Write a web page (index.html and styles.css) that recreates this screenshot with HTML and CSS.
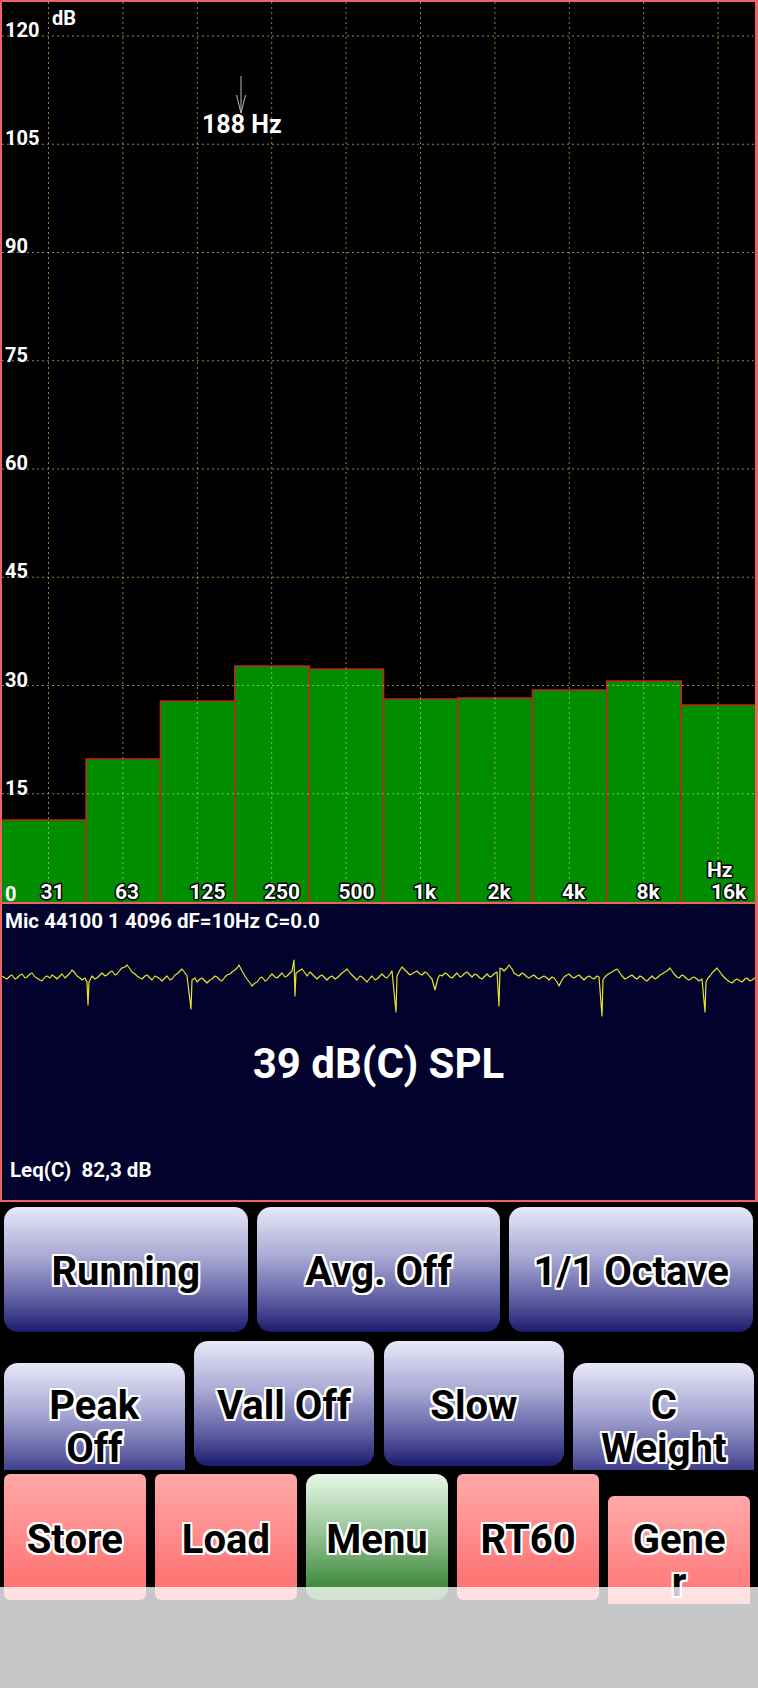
FILE: index.html
```html
<!DOCTYPE html>
<html>
<head>
<meta charset="utf-8">
<link rel="stylesheet" href="styles.css">
</head>
<body>
<div class="screen">
  <div class="chart">
    <svg class="chart-svg" width="753" height="900" viewBox="0 0 753 900">
      <g class="bars">
        <rect x="-2" y="818" width="86" height="84"/>
        <rect x="84" y="757" width="74.4" height="145"/>
        <rect x="158.4" y="699" width="74.4" height="203"/>
        <rect x="232.8" y="664" width="74.4" height="238"/>
        <rect x="307.2" y="667" width="74.4" height="235"/>
        <rect x="381.6" y="697" width="74.4" height="205"/>
        <rect x="456" y="696" width="74.4" height="206"/>
        <rect x="530.4" y="688" width="74.4" height="214"/>
        <rect x="604.8" y="679" width="74.4" height="223"/>
        <rect x="679.2" y="703" width="76" height="199"/>
      </g>
      <g class="grid">
        <line x1="0" y1="34" x2="753" y2="34"/>
        <line x1="0" y1="142.25" x2="753" y2="142.25"/>
        <line x1="0" y1="250.5" x2="753" y2="250.5"/>
        <line x1="0" y1="358.75" x2="753" y2="358.75"/>
        <line x1="0" y1="467" x2="753" y2="467"/>
        <line x1="0" y1="575.25" x2="753" y2="575.25"/>
        <line x1="0" y1="683.5" x2="753" y2="683.5"/>
        <line x1="0" y1="791.75" x2="753" y2="791.75"/>
        <line x1="46.5" y1="0" x2="46.5" y2="900"/>
        <line x1="120.9" y1="0" x2="120.9" y2="900"/>
        <line x1="195.3" y1="0" x2="195.3" y2="900"/>
        <line x1="269.7" y1="0" x2="269.7" y2="900"/>
        <line x1="344.1" y1="0" x2="344.1" y2="900"/>
        <line x1="418.5" y1="0" x2="418.5" y2="900"/>
        <line x1="492.9" y1="0" x2="492.9" y2="900"/>
        <line x1="567.3" y1="0" x2="567.3" y2="900"/>
        <line x1="641.7" y1="0" x2="641.7" y2="900"/>
        <line x1="716.1" y1="0" x2="716.1" y2="900"/>
      </g>
      <g class="ylab">
        <text x="3" y="35">120</text>
        <text x="3" y="143">105</text>
        <text x="3" y="251">90</text>
        <text x="3" y="360">75</text>
        <text x="3" y="468">60</text>
        <text x="3" y="576">45</text>
        <text x="3" y="685">30</text>
        <text x="3" y="793">15</text>
        <text x="3" y="899">0</text>
      </g>
      <text class="unit" x="50" y="23">dB</text>
      <g class="marker">
        <line x1="239" y1="74" x2="239" y2="111"/>
        <polyline points="234.5,93 239,111 243.5,93"/>
      </g>
      <text class="freq" x="200" y="131">188 Hz</text>
      <g class="xlab">
        <text x="38.5" y="897">31</text>
        <text x="113" y="897">63</text>
        <text x="187.5" y="897">125</text>
        <text x="262" y="897">250</text>
        <text x="336.5" y="897">500</text>
        <text x="411" y="897">1k</text>
        <text x="485.5" y="897">2k</text>
        <text x="560" y="897">4k</text>
        <text x="634.5" y="897">8k</text>
        <text x="709" y="897">16k</text>
        <text x="705" y="875">Hz</text>
      </g>
    </svg>
  </div>

  <div class="scope">
    <div class="scope-head">Mic 44100 1 4096 dF=10Hz C=0.0</div>
    <svg class="wave" width="753" height="90" viewBox="0 0 753 90">
      <polyline points="0,38 3,40 5,41 8,38 10,37 13,41 15,40 18,37 20,36 23,40 25,39 28,36 30,35 33,39 35,40 38,42 40,43 43,39 45,38 48,40 50,37 53,39 55,41 58,38 60,36 63,40 65,38 68,35 70,32 73,35 75,38 78,40 80,42 83,40 85,44 86,67 87,44 90,38 93,41 95,40 98,37 100,35 103,38 105,37 108,34 110,33 113,37 115,36 118,32 120,30 123,29 125,27 128,31 130,34 133,36 135,38 138,40 140,41 143,38 145,37 148,40 150,42 153,38 155,39 158,41 160,43 163,40 165,38 168,42 170,41 173,37 175,36 178,33 180,31 183,35 185,38 189,71 190,42 193,40 195,44 198,41 200,40 203,43 205,45 208,42 210,41 213,38 215,39 218,42 220,43 223,39 225,37 228,36 230,34 233,32 235,30 237,27 240,33 243,38 245,41 248,45 250,48 253,45 255,44 258,40 260,39 263,43 265,42 268,38 270,36 273,39 275,40 278,37 280,35 283,39 285,38 288,35 290,33 292,22 293,58 294,35 297,33 300,31 303,35 305,38 308,34 310,36 313,39 315,41 318,38 320,37 323,40 325,42 328,39 330,38 333,41 335,40 338,37 340,35 343,33 345,31 348,35 350,37 353,40 355,42 358,38 360,39 363,42 365,44 368,40 370,38 373,42 375,41 378,38 380,36 383,39 385,40 388,36 390,33 394,74 395,38 398,32 400,29 403,32 405,34 408,37 410,36 413,34 415,33 418,36 420,37 423,34 425,35 428,39 430,41 433,52 436,40 438,37 440,38 443,35 445,36 448,39 450,40 453,37 455,35 458,39 460,38 463,35 465,34 468,37 470,39 473,36 475,37 478,40 480,41 483,38 485,36 488,39 490,38 493,35 495,34 497,68 498,30 500,31 502,33 505,30 507,27 510,31 512,35 515,37 517,38 520,35 522,36 525,39 527,40 530,38 532,37 535,40 537,41 540,39 542,38 545,40 547,42 550,39 552,40 555,44 557,48 560,42 562,39 565,37 567,36 570,39 572,40 575,38 577,37 580,40 582,42 585,39 587,38 590,40 592,41 595,38 597,39 600,78 601,42 603,39 605,37 608,35 610,34 613,32 615,31 618,35 620,38 623,41 625,40 628,38 630,37 633,40 635,41 638,38 640,39 643,42 645,43 648,40 650,38 653,41 655,40 658,37 660,36 663,34 665,33 668,30 670,33 672,36 675,39 677,40 680,37 682,38 685,41 687,42 690,40 692,39 695,41 697,43 700,41 703,74 704,44 706,40 708,38 710,35 712,33 715,30 718,34 720,37 723,40 725,42 728,44 730,45 733,42 735,41 738,43 740,44 743,41 745,40 748,43 750,42 753,40"/>
    </svg>
    <div class="spl">39 dB(C) SPL</div>
    <div class="leq">Leq(C)&nbsp; 82,3 dB</div>
  </div>

  <div class="row row1">
    <div class="btn btn-blue"><span>Running</span></div>
    <div class="btn btn-blue"><span>Avg. Off</span></div>
    <div class="btn btn-blue"><span>1/1 Octave</span></div>
  </div>

  <div class="row row2">
    <div class="btn btn-blue"><span>Peak<br>Off</span></div>
    <div class="btn btn-blue"><span>Vall Off</span></div>
    <div class="btn btn-blue"><span>Slow</span></div>
    <div class="btn btn-blue"><span>C<br>Weight</span></div>
  </div>

  <div class="row row3">
    <div class="btn btn-red"><span>Store</span></div>
    <div class="btn btn-red"><span>Load</span></div>
    <div class="btn btn-green"><span>Menu</span></div>
    <div class="btn btn-red"><span>RT60</span></div>
    <div class="btn btn-red"><span>Gene<br>r</span></div>
  </div>
</div>
<div class="navbar"></div>
</body>
</html>
```

FILE: styles.css
```css
html, body {
  margin: 0;
  padding: 0;
  background: #000;
}

.screen {
  width: 758px;
  height: 1688px;
  overflow: hidden;
  background: #000;
  font-family: Roboto, "Liberation Sans", sans-serif;
}

.chart {
  height: 900px;
  border: 2px solid #f06262;
  border-right-width: 3px;
  background: #000;
}

.chart-svg {
  display: block;
}

.bars rect {
  fill: #008e00;
  stroke: #c42222;
  stroke-width: 1.5;
}

.grid line {
  stroke: #dede66;
  stroke-opacity: 0.62;
  stroke-width: 1;
  stroke-dasharray: 2 3;
}

.ylab text {
  font-family: Roboto, sans-serif;
  font-weight: 700;
  font-size: 20px;
  fill: #fff;
}

.unit {
  font-family: Roboto, sans-serif;
  font-weight: 700;
  font-size: 20px;
  fill: #fff;
}

.freq {
  font-family: Roboto, sans-serif;
  font-weight: 700;
  font-size: 25px;
  fill: #fff;
}

.marker line,
.marker polyline {
  fill: none;
  stroke: #b8b8b8;
  stroke-width: 1;
}

.xlab text {
  font-family: Roboto, sans-serif;
  font-weight: 700;
  font-size: 21px;
  fill: #fff;
  stroke: #000;
  stroke-width: 3px;
  stroke-linejoin: round;
  paint-order: stroke;
}

.scope {
  height: 296px;
  border: 2px solid #f06262;
  border-top: 0;
  border-right-width: 3px;
  background: #02022c;
  display: flex;
  flex-direction: column;
  color: #fff;
}

.scope-head {
  font-weight: 700;
  font-size: 20.5px;
  line-height: 24px;
  padding: 5px 0 0 3px;
}

.wave {
  display: block;
  margin-top: 5px;
}

.wave polyline {
  fill: none;
  stroke: #e6e626;
  stroke-width: 1.2;
  stroke-linejoin: round;
}

.spl {
  margin-top: 11px;
  text-align: center;
  font-weight: 700;
  font-size: 42px;
  line-height: 50px;
}

.leq {
  margin-top: auto;
  padding: 0 0 18px 8px;
  font-weight: 700;
  font-size: 20.5px;
  line-height: 24px;
}

.row {
  display: grid;
  box-sizing: content-box;
}

.row1 {
  margin-top: 5px;
  height: 125px;
  padding: 0 5px 0 4px;
  grid-template-columns: repeat(3, 1fr);
  column-gap: 9px;
}

.row2 {
  height: 129px;
  padding: 9px 4px 0 4px;
  grid-template-columns: repeat(4, 1fr);
  column-gap: 9.33px;
  align-items: baseline;
  overflow: hidden;
}

.row3 {
  height: 130px;
  padding: 4px 8px 0 4px;
  grid-template-columns: repeat(5, 1fr);
  column-gap: 9.5px;
  align-items: baseline;
  overflow: hidden;
}

.btn {
  box-sizing: border-box;
  height: 125px;
  padding-top: 4px;
  display: flex;
  flex-direction: column;
  justify-content: center;
  align-items: center;
  text-align: center;
  font-family: Roboto, "Liberation Sans", sans-serif;
  font-weight: 700;
  font-size: 40px;
  line-height: 43px;
  color: #000;
  white-space: nowrap;
  text-shadow:
    -2px -2px 0 #fff, 0 -2px 0 #fff, 2px -2px 0 #fff, 2px 0 0 #fff,
    2px 2px 0 #fff, 0 2px 0 #fff, -2px 2px 0 #fff, -2px 0 0 #fff,
    -1px -2px 0 #fff, 1px -2px 0 #fff, -1px 2px 0 #fff, 1px 2px 0 #fff;
}

.btn-blue {
  border-radius: 14px;
  background: linear-gradient(180deg, #e8e8f8 0%, #a8a8d4 40%, #5c5ca2 75%, #1b1b6e 100%);
}

.row3 .btn {
  height: 126px;
}

.btn-red {
  border-radius: 6px;
  background: linear-gradient(180deg, #ffa8a8 0%, #ff8a8a 50%, #ff6c6c 100%);
}

.btn-green {
  border-radius: 12px;
  background: linear-gradient(180deg, #e8f8e8 0%, #98c698 45%, #2c7c2c 100%);
}

.navbar {
  position: fixed;
  left: 0;
  right: 0;
  bottom: 0;
  height: 101px;
  background: rgba(255, 255, 255, 0.78);
}
```
